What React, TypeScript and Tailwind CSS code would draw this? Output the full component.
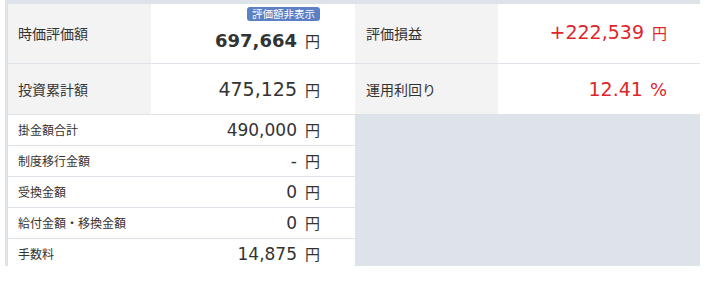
const num = "font-['DejaVu_Sans','Noto_Sans_CJK_JP',sans-serif]";
const jp = "font-['Noto_Sans_CJK_JP',sans-serif]";

function Amount({ value, unit = "円", size, bold, red }: { value: string; unit?: string; size: string; bold?: boolean; red?: boolean }) {
  const unitClass = unit === "%" ? `${num} text-[18px] ml-[7px]` : `${jp} text-[15px] ml-[8px]`;
  return (
    <div className={`flex items-baseline ${red ? "text-[#e0262b]" : "text-[#333]"}`}>
      <span className={`${num} ${size} leading-[21px] ${bold ? "font-bold" : ""}`}>{value}</span>
      <span className={`${unitClass} leading-[21px]`}>{unit}</span>
    </div>
  );
}

const lower = [
  { label: "掛金額合計", value: "490,000" },
  { label: "制度移行金額", value: "-" },
  { label: "受換金額", value: "0" },
  { label: "給付金額・移換金額", value: "0" },
  { label: "手数料", value: "14,875" },
];

export default function App() {
  return (
    <div className="w-[724px] h-[304px] bg-white pl-[5px]">
      <div className="w-[695px] h-[266px] overflow-hidden bg-[#dde3e9] pt-[4px] pl-[3px] flex flex-col gap-px">
        {/* summary rows */}
        <div className="grid grid-cols-[143px_204px_143px_202px] grid-rows-[59px_50px] gap-y-px">
          <div className={`${jp} bg-[#f3f3f3] text-[#333] text-[14px] px-[10px] flex items-center`}>時価評価額</div>
          <div className="bg-white flex flex-col items-end pr-[35px] pt-[3px]">
            <span className={`${jp} h-[14px] px-[5px] rounded-[3px] bg-[#5b80c4] text-white text-[10.5px] leading-[14px]`}>評価額非表示</span>
            <div className="mt-[9px]">
              <Amount value="697,664" size="text-[18px]" bold />
            </div>
          </div>
          <div className={`${jp} bg-[#f3f3f3] text-[#333] text-[14px] px-[11px] flex items-center`}>評価損益</div>
          <div className="bg-white flex items-center justify-end pr-[33px] pb-[2px]">
            <Amount value="+222,539" size="text-[19px]" red />
          </div>

          <div className={`${jp} bg-[#f3f3f3] text-[#333] text-[14px] px-[10px] flex items-center`}>投資累計額</div>
          <div className="bg-white flex items-center justify-end pr-[35px]">
            <Amount value="475,125" size="text-[19px]" />
          </div>
          <div className={`${jp} bg-[#f3f3f3] text-[#333] text-[14px] px-[11px] flex items-center`}>運用利回り</div>
          <div className="bg-white flex items-center justify-end pr-[33px]">
            <Amount value="12.41" unit="%" size="text-[19px]" red />
          </div>
        </div>

        {/* detail rows */}
        <div className="flex">
          <div className="w-[347px] flex flex-col gap-px">
            {lower.map((r) => (
              <div key={r.label} className="h-[30px] shrink-0 bg-white flex items-center justify-between pl-[10px] pr-[35px]">
                <span className={`${jp} text-[12px] text-[#333]`}>{r.label}</span>
                <Amount value={r.value} size="text-[17px]" />
              </div>
            ))}
          </div>
          <div className="flex-1" />
        </div>
      </div>
    </div>
  );
}
